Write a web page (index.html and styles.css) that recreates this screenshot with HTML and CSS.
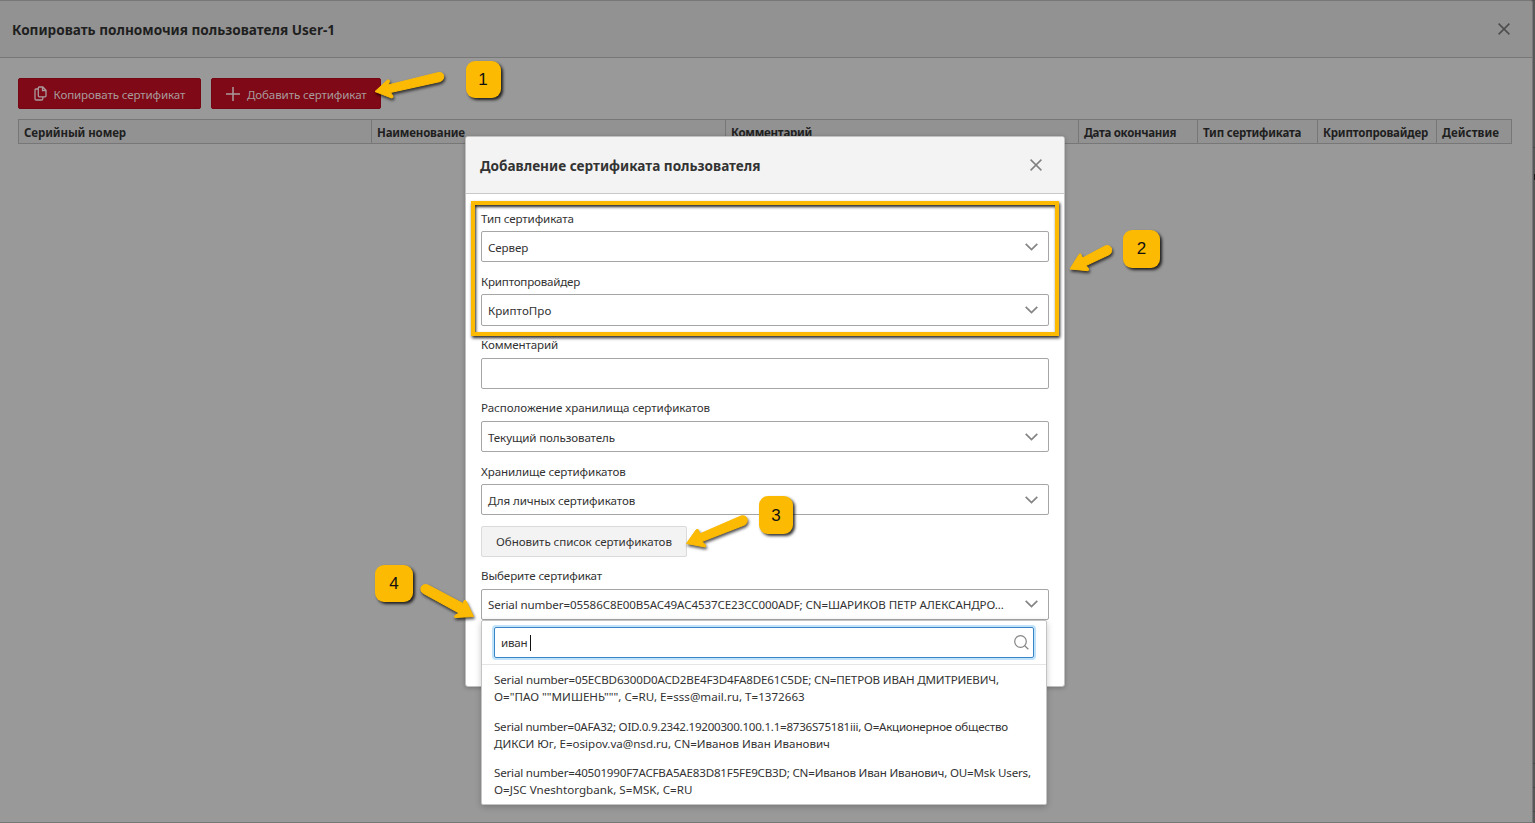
FILE: index.html
```html
<!DOCTYPE html>
<html lang="ru">
<head>
<meta charset="utf-8">
<title>Копировать полномочия пользователя</title>
<link rel="stylesheet" href="styles.css">
</head>
<body>
<div class="screen">
  <main class="page">
    <header class="page-head">
      <h1 class="title">Копировать полномочия пользователя User-1</h1>
      <svg class="close" width="12" height="12" viewBox="0 0 12 12"><path d="M.6.6l10.8 10.8M11.4.6L.6 11.4"/></svg>
    </header>
    <div class="toolbar">
      <button class="btn btn-copy"><svg width="13" height="15" viewBox="0 0 13 15"><path d="M5.300 1H8.800L12 4.200V9.800Q12 10.800 11 10.800H5.300Q4.300 10.800 4.300 9.800V2Q4.300 1 5.300 1ZM8.500 1V4.500H12M4.300 3H2Q1 3 1 4V12.700Q1 14 2.300 14H7.500Q8.800 14 8.800 12.800V11"/></svg><span>Копировать сертификат</span></button>
      <button class="btn btn-add"><svg width="14" height="14" viewBox="0 0 14 14"><path d="M7 0v14M0 7h14"/></svg><span>Добавить сертификат</span></button>
    </div>
    <div class="table">
      <div class="th t1">Серийный номер</div><div class="th t2">Наименование</div><div class="th t3">Комментарий</div><div class="th t4">Дата окончания</div><div class="th t2">Тип сертификата</div><div class="th t2">Криптопровайдер</div><div class="th t5">Действие</div>
    </div>
  </main>
  <aside class="strip"><span class="peek"></span><i></i><i></i><i></i></aside>

  <section class="modal">
    <header class="modal-head">
      <h2 class="title">Добавление сертификата пользователя</h2>
      <svg class="close" width="12" height="12" viewBox="0 0 12 12"><path d="M.6.6l10.8 10.8M11.4.6L.6 11.4"/></svg>
    </header>
    <div class="form">
      <div class="field"><label>Тип сертификата</label><div class="select"><span>Сервер</span><svg class="chev" width="13" height="8" viewBox="0 0 13 8"><path d="M.7.8l5.800 5.700L12.300.8"/></svg></div></div>
      <div class="field"><label class="w-tight">Криптопровайдер</label><div class="select"><span class="w-loose">КриптоПро</span><svg class="chev" width="13" height="8" viewBox="0 0 13 8"><path d="M.7.8l5.800 5.700L12.300.8"/></svg></div></div>
      <div class="field raised"><label>Комментарий</label><div class="select"></div></div>
      <div class="field raised"><label class="w-near">Расположение хранилища сертификатов</label><div class="select"><span>Текущий пользователь</span><svg class="chev" width="13" height="8" viewBox="0 0 13 8"><path d="M.7.8l5.800 5.700L12.300.8"/></svg></div></div>
      <div class="field"><label class="w-mid">Хранилище сертификатов</label><div class="select"><span class="w-mid">Для личных сертификатов</span><svg class="chev" width="13" height="8" viewBox="0 0 13 8"><path d="M.7.8l5.800 5.700L12.300.8"/></svg></div></div>
      <button class="refresh">Обновить список сертификатов</button>
      <div class="field last"><label>Выберите сертификат</label><div class="select"><span class="w-serial">Serial number=05586C8E00B5AC49AC4537CE23CC000ADF; CN=ШАРИКОВ ПЕТР АЛЕКСАНДРО...</span><svg class="chev" width="13" height="8" viewBox="0 0 13 8"><path d="M.7.8l5.800 5.700L12.300.8"/></svg></div></div>
    </div>
  </section>

  <div class="dropdown">
    <div class="search-row">
      <div class="search"><span class="query">иван</span><i class="caret"></i><svg class="lens" width="15" height="15" viewBox="0 0 15 15"><circle cx="6.500" cy="6.500" r="5.800"/><path d="M10.700 10.700l3.700 3.500"/></svg></div>
    </div>
    <div class="option"><div class="w-opt1">Serial number=05ECBD6300D0ACD2BE4F3D4FA8DE61C5DE; CN=ПЕТРОВ ИВАН ДМИТРИЕВИЧ,</div><div class="w-loose">O="ПАО ""МИШЕНЬ""", C=RU, E=sss@mail.ru, T=1372663</div></div>
    <div class="option"><div class="w-opt2">Serial number=0AFA32; OID.0.9.2342.19200300.100.1.1=8736S75181iii, O=Акционерное общество</div><div class="w-opt3">ДИКСИ Юг, E=osipov.va@nsd.ru, CN=Иванов Иван Иванович</div></div>
    <div class="option"><div class="w-opt4">Serial number=40501990F7ACFBA5AE83D81F5FE9CB3D; CN=Иванов Иван Иванович, OU=Msk Users,</div><div class="w-loose">O=JSC Vneshtorgbank, S=MSK, C=RU</div></div>
  </div>

  <div class="frame"></div>
  <svg class="arrows" width="1535" height="823" viewBox="0 0 1535 823">
    <path d="M375 91.500L387.500 80Q390 79.500 389.500 81.500L388 85L438.500 72.500Q443 72 443.800 76Q444 80 440.500 81.500L390.500 92.500L393 96Q393.500 98 391.500 98Z"/>
    <path d="M1070 269L1079 254.500Q1080.500 252.500 1081.500 255.500L1082.500 258L1105 246Q1109.500 244.500 1111.300 248Q1112.500 252.500 1109.500 254.500L1086 265.500L1088.500 268.500Q1089.500 270.500 1087.500 270.700Z"/>
    <path d="M686.500 543.500L696 530Q698.500 528 699 531.500L699.500 534L741 516Q745.500 515 747 518.500Q748 523 744.500 525L702 541.500L705.500 545Q706.500 546.700 705 547Z"/>
    <path d="M473.500 616.500L466 601Q465 599 464 601L463 603.500L428 585Q423.500 583.500 421.200 587Q420 591.500 423.500 593.500L459 613L455 615.500Q453 617.200 455.500 617.500Z"/>
  </svg>
  <b class="badge b1">1</b><b class="badge b2">2</b><b class="badge b3">3</b><b class="badge b4">4</b>
</div>
</body>
</html>
```
FILE: styles.css
```css
*{box-sizing:border-box}
body{margin:0;font-family:"Noto Sans","Open Sans",sans-serif;font-size:11.6px;letter-spacing:-.13px;color:#333;overflow:hidden}
button{font:inherit;letter-spacing:inherit;white-space:nowrap}
svg{display:block;fill:none}
.screen{position:relative;display:flex;width:1535px;height:823px;background:#585858}
.page{width:1533px;height:823px;background:#999;border:solid #777;border-width:1px 1px 1px 0;border-radius:0 3px 0 0}
.page-head{height:57px;display:flex;align-items:center;justify-content:space-between;padding:0 22px 0 12px;background:#929292;border-bottom:1px solid #777;border-radius:0 3px 0 0}
.title{margin:0;font-size:13.6px;line-height:20px;letter-spacing:0;font-weight:700;color:#333;white-space:nowrap}
.page-head .title{color:#1f1f1f;padding-top:2px}
.close{stroke:#808080;stroke-width:1.5}
.page-head .close{stroke:#4d4d4d}
.toolbar{display:flex;gap:10px;padding:20px 0 0 18px}
.btn{height:31px;display:flex;align-items:center;gap:7px;padding:1px 0 0 15px;background:#7f0916;border:1px solid #740713;border-radius:2px;color:#a89a9b}
.btn svg{stroke:#aa9a9c;stroke-width:1.3;margin-top:-1px}
.btn-copy{width:183px;padding-left:14.500px}
.btn-add{width:170px;padding-left:14px}
.btn-add svg{stroke-width:1.5}
.table{display:grid;grid-template-columns:353px 354px 353px 119px 120px 119px 75px;width:1494px;height:25px;margin:10px 0 0 18px;border:1px solid #777;background:#929292}
.th{border-right:1px solid #777;padding:4px 0 0 5px;font-size:11.5px;line-height:18px;font-weight:700;color:#1f1f1f;letter-spacing:-.2px;white-space:nowrap;overflow:hidden}
.th:last-child{border-right:0}
.t1{letter-spacing:-.1px}.t3{letter-spacing:-.26px}.t4{letter-spacing:-.31px}.t5{letter-spacing:.06px}
.strip{width:2px;padding-top:146px;border-top:1px solid #505050}
.peek{display:block;height:616px;border-top:1px solid #444;background:linear-gradient(#1b1b1b,#1b1b1b) 1px 26px/1px 6px no-repeat}
.strip i{display:block;height:24px;border-bottom:1px solid #444}
.strip .peek + i{height:1px}

.modal{position:absolute;left:465px;top:136px;width:600px;height:551px;background:#fff;border:1px solid #c0c0c0;border-radius:3px;box-shadow:0 1px 4px rgba(0,0,0,.25)}
.modal-head{height:57px;display:flex;align-items:center;justify-content:space-between;padding:0 22px 0 14px;background:#f3f3f3;border-bottom:1px solid #c8c8c8;border-radius:2px 2px 0 0}
.modal-head .title{padding-top:1px}
.form{padding:17px 15px 0}
.field{height:63.3px}
.field label{display:block;height:20px;line-height:16px}
.raised label{line-height:14.500px}
.select{height:31.3px;display:flex;align-items:center;justify-content:space-between;border:1px solid #a6a6a6;border-radius:2px;padding:2px 10px 0 6px;background:#fff;white-space:nowrap}
.chev{stroke:#848484;stroke-width:1.7;margin-top:-1px}
.refresh{display:block;width:206px;height:31px;margin:-1.500px 0 11.500px;padding:1px 0 0;background:#f3f3f3;border:1px solid #dadada;border-radius:2px;color:#333;letter-spacing:-.08px}
.last label{height:20.800px}
.last .select{height:31px;padding-top:0}
.last .chev{margin-top:-2px}
.w-tight{letter-spacing:-.22px}.w-loose{letter-spacing:.02px}.w-near{letter-spacing:-.05px}.w-mid{letter-spacing:-.09px}
.w-serial{letter-spacing:-.103px}.w-opt1{letter-spacing:-.18px}.w-opt2{letter-spacing:-.25px}.w-opt3{letter-spacing:-.02px}.w-opt4{letter-spacing:-.197px}

.dropdown{position:absolute;left:481px;top:620px;width:566px;height:185px;background:#fff;border:1px solid #c4c4c4;border-radius:2px;box-shadow:0 2px 6px rgba(0,0,0,.22)}
.search-row{height:44px;padding:6px 12px 0;border-bottom:1px solid #e5e5e5}
.search{height:31px;display:flex;align-items:center;padding:0 4px 0 6px;border:1px solid #3984c6;border-radius:2px;box-shadow:0 0 0 2px #c0e2fb}
.query{letter-spacing:-.25px}
.caret{width:1px;height:16px;margin-left:3px;background:#111}
.lens{margin-left:auto;margin-top:-1px;stroke:#858585;stroke-width:1.200}
.option{height:46.500px;padding:6px 12px 0;line-height:17.300px;white-space:nowrap}

.frame{position:absolute;left:471px;top:201px;width:588px;height:135px;border:4px solid #fcba02;box-shadow:1px 2px 3px rgba(0,0,0,.85),inset 1px 2px 3px rgba(0,0,0,.85)}
.arrows{position:absolute;left:0;top:0;fill:#fcba02;stroke:#fcba02;stroke-width:1;stroke-linejoin:round;filter:drop-shadow(1.500px 2px 1.500px rgba(0,0,0,.7))}
.badge{position:absolute;display:flex;align-items:center;justify-content:center;width:35px;height:37px;border-radius:9px;background:#fcba02;color:#111;font:17px "Liberation Sans",Arial,sans-serif;letter-spacing:0;box-shadow:2px 2px 3px rgba(0,0,0,.8)}
.b1{left:466px;top:61px;padding-right:1px}
.b2{left:1123px;top:230px;width:37px;height:38px}
.b3{left:759px;top:496px;width:34px;height:38px;padding-top:2px}
.b4{left:375px;top:565px;width:38px;height:37px}
```
